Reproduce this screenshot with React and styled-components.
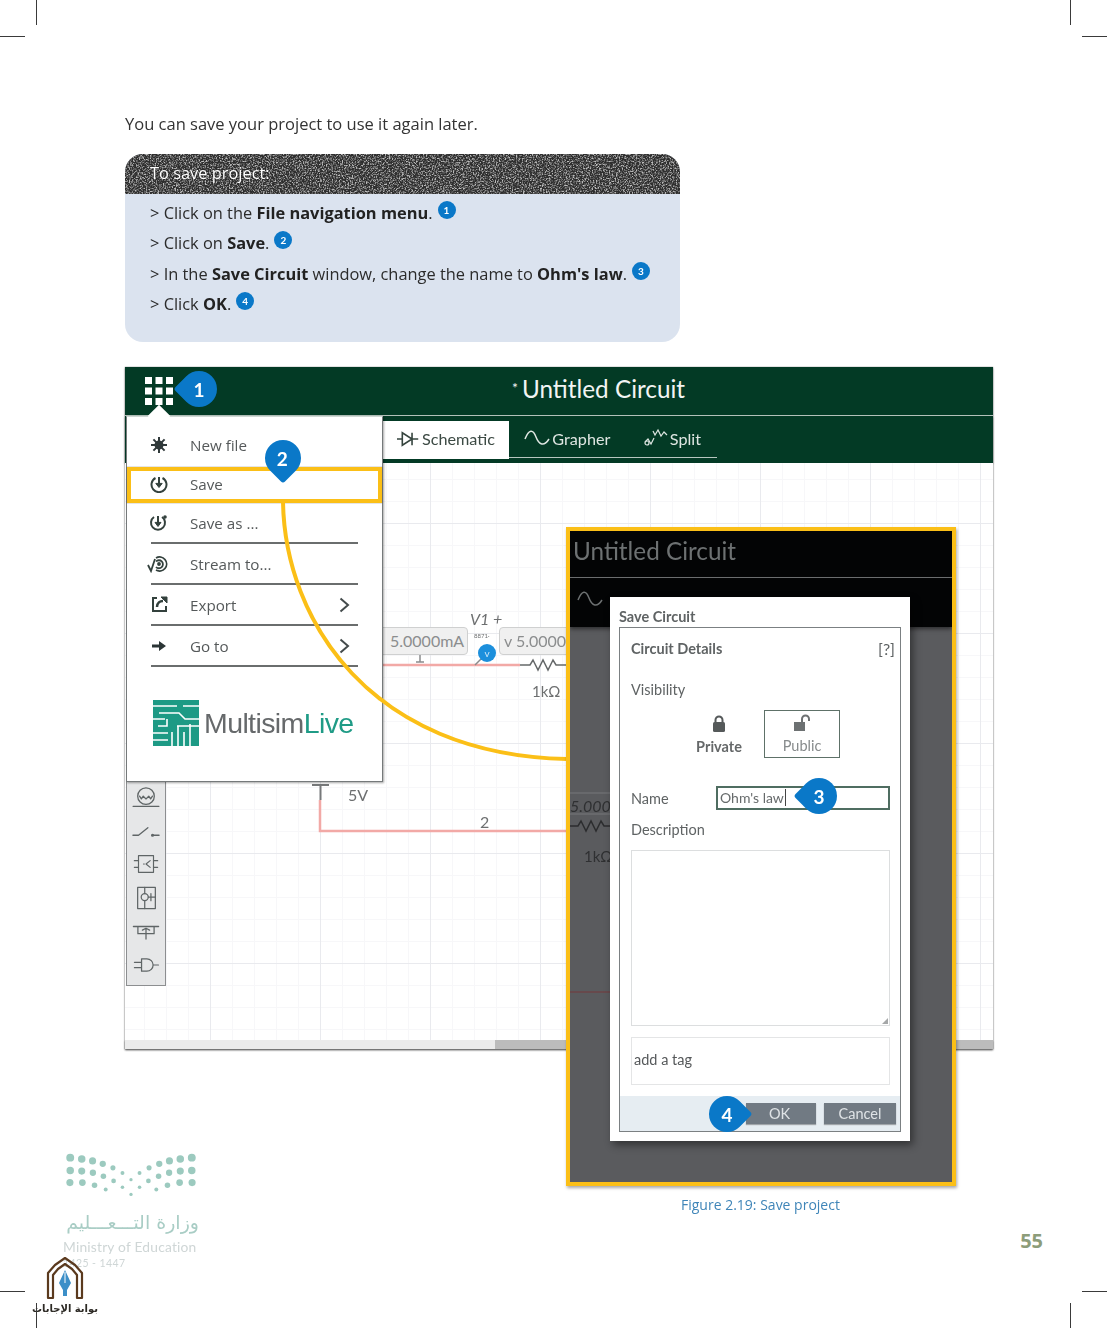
import React from "react";
import styled, { createGlobalStyle } from "styled-components";

const Global = createGlobalStyle`
  html, body { margin: 0; padding: 0; background: #fff; }
  * { box-sizing: border-box; }
`;

const YELLOW = "#fbbf17";
const BLUE = "#0a78c8";
const UI = `Lato, "Liberation Sans", sans-serif`;

const Page = styled.div`
  position: relative;
  width: 1107px;
  height: 1328px;
  overflow: hidden;
  padding: 114px 0 0 125px;
  background: #fff;
  font-family: "Open Sans", "Noto Sans", sans-serif;
  color: #2d2d2d;
`;
const Soft = styled.div`
  filter: blur(0.35px);
`;
const Intro = styled.p`
  margin: 0 0 20px;
  font-size: 16.5px;
  line-height: 20px;
  color: #333;
`;
const Callout = styled.section`
  width: 555px;
  height: 188px;
  border-radius: 18px;
  overflow: hidden;
  background: #dbe3ef;
`;
const CalloutHead = styled.div`
  position: relative;
  height: 40px;
  padding: 9px 25px;
  font-size: 16.4px;
  line-height: 20px;
  color: #fff;
  background: #2e2e2e;
  span { position: relative; text-shadow: 0 0 2px #222; }
`;
const Noise = styled.svg`
  position: absolute;
  inset: 0;
  width: 100%;
  height: 100%;
`;
const Steps = styled.ol`
  list-style: none;
  margin: 0;
  padding: 5px 0 0 25px;
  font-size: 16.4px;
  color: #2b2b2b;
`;
const Step = styled.li`
  height: 30.3px;
  line-height: 28px;
  white-space: nowrap;
  b { font-weight: 700; color: #222; }
`;
const Num = styled.span`
  display: inline-flex;
  align-items: center;
  justify-content: center;
  width: 18px;
  height: 18px;
  margin-left: 5px;
  border-radius: 50%;
  background: ${BLUE};
  color: #fff;
  font: 700 10px ${UI};
  vertical-align: 5px;
`;
const Figure = styled.figure`
  position: relative;
  width: 868px;
  height: 819px;
  margin: 25px 0 0;
`;
const AppWindow = styled.div`
  display: flex;
  flex-direction: column;
  width: 868px;
  height: 682px;
  background: #fff;
  box-shadow: 0 1px 2px rgba(0,0,0,.45), 0 0 1px rgba(0,0,0,.5);
  font-family: ${UI};
`;
const TitleBar = styled.header`
  height: 49px;
  flex: none;
  display: flex;
  align-items: center;
  justify-content: center;
  padding: 0 0 6px 79px;
  background: #033a25;
  border-bottom: 1px solid #b9c7c0;
  color: #f2f4f3;
  font-size: 24.3px;
  sup { font-size: 14px; margin-right: 4px; line-height: 0; }
`;
const TabBar = styled.nav`
  height: 47px;
  flex: none;
  display: flex;
  align-items: flex-start;
  padding: 5px 0 0 258px;
  background: #033a25;
  box-shadow: 0 1px 2px rgba(0,0,0,.4);
`;
const TabTrack = styled.div`
  display: flex;
  height: 37px;
  width: 208px;
  border-bottom: 1px solid #b7c6bf;
`;
const Tab = styled.div`
  width: ${p => p.$w}px;
  height: ${p => p.$active ? 38 : 36}px;
  display: flex;
  align-items: center;
  justify-content: ${p => p.$active ? "center" : "flex-end"};
  gap: 2px;
  padding: 0 ${p => p.$active ? 0 : 16}px ${p => p.$active ? 3 : 2}px 0;
  background: ${p => p.$active ? "#fff" : "transparent"};
  color: ${p => p.$active ? "#3c4a44" : "#dfe6e2"};
  font-size: 16.2px;
`;
const Canvas = styled.main`
  position: relative;
  flex: 1;
  background-color: #fff;
  background-image:
    linear-gradient(#e9eaee 1px, transparent 1px),
    linear-gradient(90deg, #e9eaee 1px, transparent 1px),
    linear-gradient(#f7f7f9 1px, transparent 1px),
    linear-gradient(90deg, #f7f7f9 1px, transparent 1px);
  background-size: 110px 110px, 110px 110px, 22px 22px, 22px 22px;
  background-position: 0 60px, 85px 0, 0 16px, 19px 0;
`;
const Scrollbar = styled.div`
  height: 9px;
  flex: none;
  background: #ececec;
  display: flex;
  justify-content: flex-end;
  box-shadow: 0 1px 2px rgba(0,0,0,.4);
`;
const ScrollThumb = styled.div`
  width: 498px;
  background: #bcbcbc;
`;
const Label = styled.span`
  position: absolute;
  left: ${p => p.$x}px;
  top: ${p => p.$y}px;
  font-size: ${p => p.$size || 16}px;
  font-style: ${p => p.$italic ? "italic" : "normal"};
  color: ${p => p.$color || "#6d6f70"};
  line-height: 1;
  white-space: nowrap;
`;
const Chip = styled.div`
  position: absolute;
  left: ${p => p.$x}px;
  top: 164px;
  width: ${p => p.$w}px;
  height: 28px;
  padding-left: ${p => p.$pad}px;
  border: 1.5px solid #cfd0d0;
  border-radius: 4px;
  background: #f0f0f0;
  color: #8b8d8e;
  font-size: 16px;
  line-height: 25px;
  white-space: nowrap;
`;
const Wires = styled.svg`
  position: absolute;
  left: 0;
  top: 0;
  width: 868px;
  height: 577px;
`;
const Probe = styled.span`
  position: absolute;
  left: 353px;
  top: 181px;
  width: 18px;
  height: 18px;
  border-radius: 50%;
  background: #1c8fdc;
  color: #cfe8fa;
  font-size: 10px;
  line-height: 18px;
  text-align: center;
`;
const Toolbox = styled.aside`
  position: absolute;
  left: 1px;
  top: 414px;
  width: 40px;
  height: 205px;
  display: flex;
  flex-direction: column;
  align-items: center;
  background: #e6e7e8;
  border: 1px solid #8c8e90;
  border-top: 0;
`;
const ToolSlot = styled.div`
  height: 33.4px;
  flex: none;
  display: flex;
  align-items: center;
  justify-content: center;
`;
const Menu = styled.div`
  position: absolute;
  left: 1px;
  top: 49px;
  width: 257px;
  height: 366px;
  padding-top: 8px;
  background: #fff;
  border: 1.5px solid #75797a;
  border-top-color: #cfd6d3;
  box-shadow: 1px 1px 2px rgba(0,0,0,.35);
  &::before {
    content: "";
    position: absolute;
    left: 24px;
    top: -9px;
    width: 16px;
    height: 16px;
    background: #fff;
    transform: rotate(45deg);
  }
`;
const MenuRow = styled.div`
  position: relative;
  height: ${p => p.$h}px;
  margin: 0 24px;
  display: flex;
  align-items: center;
  border-bottom: ${p => p.$line ? "2px solid #6a6d6d" : "0"};
  color: #55595a;
  font-size: 15.2px;
`;
const MenuIcon = styled.span`
  width: 51px;
  margin-left: -12px;
  padding-right: 11px;
  display: flex;
  align-items: center;
  justify-content: center;
  flex: none;
`;
const Chevron = styled.span`
  margin-left: auto;
  margin-right: 8px;
  display: flex;
`;
const Logo = styled.div`
  margin: 33px 0 0 26px;
  display: flex;
  align-items: center;
  gap: 5px;
  font: 400 28.5px "Liberation Sans", sans-serif;
  letter-spacing: -0.6px;
  color: #66696b;
  em { font-style: normal; color: #1f9b86; }
`;
const SaveFrame = styled.div`
  position: absolute;
  left: 2px;
  top: 100px;
  width: 255px;
  height: 36px;
  border: 4px solid ${YELLOW};
  box-shadow: 0 0 1px rgba(0,0,0,.6);
`;
const Connector = styled.svg`
  position: absolute;
  left: 0;
  top: 0;
  width: 868px;
  height: 819px;
  pointer-events: none;
`;
const Overlay = styled.div`
  position: absolute;
  left: 441px;
  top: 160px;
  width: 390px;
  height: 659px;
  background: #5a5b5e;
  border: 4.5px solid ${YELLOW};
  box-shadow: 1px 2px 3px rgba(0,0,0,.35);
  overflow: hidden;
  font-family: ${UI};
`;
const DarkTop = styled.div`
  height: 96px;
  background: #030405;
  box-shadow: 0 2px 4px rgba(0,0,0,.5);
`;
const DarkTitle = styled.div`
  height: 47px;
  border-bottom: 1px solid #6b6d6f;
  padding: 5px 0 0 3px;
  font-size: 24.3px;
  color: #6d7172;
`;
const DarkIcon = styled.div`
  padding: 12px 0 0 6px;
`;
const DimWires = styled.svg`
  position: absolute;
  left: 0;
  top: 96px;
  width: 40px;
  height: 400px;
`;
const Dialog = styled.div`
  position: absolute;
  left: 40px;
  top: 66px;
  width: 300px;
  height: 544px;
  padding: 12px 9px 9px;
  background: #fff;
  box-shadow: 3px 4px 8px rgba(0,0,0,.45);
  color: #5f6364;
`;
const DialogTitle = styled.div`
  height: 18px;
  font-size: 14.5px;
  font-weight: 700;
  line-height: 16px;
`;
const Details = styled.div`
  display: flex;
  flex-direction: column;
  height: 505px;
  border: 1.5px solid #7b8082;
`;
const DetailsBody = styled.div`
  flex: 1;
  padding: 12px 10px 0 11px;
`;
const HeadRow = styled.div`
  display: flex;
  justify-content: space-between;
  font-size: 14.5px;
  font-weight: 700;
  line-height: 18px;
  span { font-size: 16px; font-weight: 400; margin-right: -5px; }
`;
const FieldLabel = styled.div`
  font-size: 14.5px;
  line-height: 18px;
  margin-top: ${p => p.$mt}px;
`;
const Visibility = styled.div`
  display: flex;
  justify-content: flex-start;
  margin: 11px 0 0 43px;
`;
const VisOption = styled.div`
  width: ${p => p.$w}px;
  height: 48px;
  display: flex;
  flex-direction: column;
  align-items: center;
  justify-content: flex-end;
  gap: 5px;
  padding-bottom: 3px;
  font-size: 14.5px;
  font-weight: ${p => p.$selected ? 400 : 700};
  color: ${p => p.$selected ? "#878b8c" : "#656869"};
  border: ${p => p.$selected ? "1.5px solid #5e7168" : "0"};
`;
const NameRow = styled.div`
  display: flex;
  align-items: center;
  margin-top: 28px;
  font-size: 14.5px;
`;
const NameField = styled.div`
  width: 174px;
  height: 24px;
  margin-left: auto;
  padding-left: 2px;
  border: 2px solid #4f6d61;
  font-size: 14px;
  line-height: 20px;
  color: #666a6b;
  span { border-right: 1px solid #444; padding-right: 1px; }
`;
const TextArea = styled.div`
  position: relative;
  height: 176px;
  margin-top: 11px;
  border: 1.5px solid #dcdedf;
  &::after {
    content: "";
    position: absolute;
    right: 1px;
    bottom: 1px;
    border-style: solid;
    border-width: 0 0 6px 6px;
    border-color: transparent transparent #a5a7a8 transparent;
  }
`;
const TagField = styled.div`
  height: 48px;
  margin-top: 11px;
  padding-left: 2px;
  border: 1.5px solid #e4e5e6;
  font-size: 14.5px;
  line-height: 44px;
  color: #55585a;
`;
const DialogFoot = styled.div`
  height: 35px;
  flex: none;
  display: flex;
  justify-content: flex-end;
  gap: 8px;
  padding: 7px 4px 0 0;
  background: #e6edf2;
`;
const FootButton = styled.div`
  width: ${p => p.$w}px;
  height: 21px;
  background: #717a83;
  color: #dfe3e6;
  font-size: 14.5px;
  line-height: 21px;
  text-align: ${p => p.$align};
  padding-left: ${p => p.$pad}px;
  box-shadow: 0 1px 1px rgba(0,0,0,.3);
`;
const Pin = styled.div`
  position: absolute;
  left: ${p => p.$x - 18}px;
  top: ${p => p.$y - 18}px;
  width: 36px;
  height: 36px;
  display: flex;
  align-items: center;
  justify-content: center;
  background: ${BLUE};
  border-radius: ${p => p.$dir === "left" ? "8% 50% 50% 50%" : "50% 50% 8% 50%"};
  transform: rotate(${p => p.$dir === "down" ? 45 : 315}deg);
  color: #fff;
  font: 700 19px ${UI};
  span { transform: rotate(${p => p.$dir === "down" ? -45 : 45}deg); }
`;
const Caption = styled.figcaption`
  position: absolute;
  left: 556px;
  top: 828px;
  font-size: 14px;
  line-height: 20px;
  color: #3f85b8;
  white-space: nowrap;
`;
const PageNumber = styled.div`
  position: absolute;
  right: 64px;
  top: 1227px;
  font: 700 20px "Open Sans", sans-serif;
  color: #8d9d7a;
`;
const Ministry = styled.div`
  position: absolute;
  left: 63px;
  top: 1153px;
  width: 136px;
  display: flex;
  flex-direction: column;
  color: #b5d2cb;
`;
const MinistryAr = styled.div`
  margin-top: 6px;
  height: 26px;
  direction: rtl;
  font: 400 19px "DejaVu Sans", sans-serif;
  line-height: 26px;
  white-space: nowrap;
  color: #a9cdc5;
`;
const MinistryEn = styled.div`
  margin-top: ${p => p.$mt}px;
  font: 400 ${p => p.$size}px Lato, sans-serif;
  letter-spacing: ${p => p.$ls}px;
  white-space: nowrap;
  color: #cfd6d6;
`;
const Watermark = styled.div`
  position: absolute;
  left: 20px;
  top: 1256px;
  width: 90px;
  display: flex;
  flex-direction: column;
  align-items: center;
  color: #2d2a25;
`;
const WatermarkText = styled.div`
  font: 700 10px "DejaVu Sans", sans-serif;
  direction: rtl;
  margin-top: 3px;
  white-space: nowrap;
`;
const Crop = styled.i`
  position: absolute;
  background: #3a3a3a;
  left: ${p => p.$l ?? "auto"};
  right: ${p => p.$r ?? "auto"};
  top: ${p => p.$t ?? "auto"};
  bottom: ${p => p.$b ?? "auto"};
  width: ${p => p.$v ? "1px" : "25px"};
  height: ${p => p.$v ? "25px" : "1px"};
`;

const Stroke = { fill: "none", stroke: "#5f6566", strokeWidth: 1.4, strokeLinecap: "round", strokeLinejoin: "round" };

const GridIcon = () => (
  <svg width="28" height="28" viewBox="0 0 28 28" fill="#fff" style={{ position: "absolute", left: 20, top: 10 }}>
    {[0, 10.5, 21].flatMap(y => [0, 10.5, 21].map(x => <rect key={x + "-" + y} x={x} y={y} width="7" height="7" />))}
  </svg>
);
const Diode = () => (
  <svg width="23" height="18" viewBox="0 0 26 18" fill="none" stroke="#35443e" strokeWidth="1.8">
    <path d="M0 9h6M6 2v14l11-7zM17 2v14M17 9h7" />
  </svg>
);
const Sine = ({ w = 26, c = "#dfe6e2" }) => (
  <svg width={w} height="18" viewBox="0 0 26 18" fill="none" stroke={c} strokeWidth="1.5">
    <path d="M1 10C5 0 9 0 12 8s8 10 13 2" />
  </svg>
);
const SplitIcon = () => (
  <svg width="24" height="20" viewBox="0 0 24 20" fill="none" stroke="#dfe6e2" strokeWidth="1.2">
    <path d="M1 14l3-3 3 5 3-6M9 3l2 4 3-5 3 6 3-4 3 3" />
    <circle cx="3" cy="15" r="2" />
  </svg>
);
const Burst = () => (
  <svg width="16" height="16" viewBox="0 0 16 16" stroke="#30393a" strokeWidth="2" fill="#30393a">
    <path d="M8 0v16M0 8h16M2.4 2.4l11.2 11.2M13.6 2.4L2.4 13.6" /><circle cx="8" cy="8" r="3.5" />
  </svg>
);
const SaveIcon = () => (
  <svg width="18" height="18" viewBox="0 0 18 18" fill="none" stroke="#33413d" strokeWidth="2">
    <path d="M5.500 3a7.500 7.500 0 1 0 7 0" /><path d="M9 2v7" /><path d="M5.800 8.400L9 12.500l3.200-4.100z" fill="#33413d" strokeWidth="1" />
  </svg>
);
const SaveAsIcon = () => (
  <svg width="20" height="18" viewBox="0 0 20 18" fill="none" stroke="#33413d" strokeWidth="2">
    <path d="M5 3a7 7 0 1 0 8 0" /><path d="M9 2v7" /><path d="M6 8.400L9 12.500l3-4.100z" fill="#33413d" strokeWidth="1" /><circle cx="16" cy="3" r="1.800" fill="#33413d" stroke="none" />
  </svg>
);
const StreamIcon = () => (
  <svg width="24" height="18" viewBox="0 0 24 18" fill="none" stroke="#33413d" strokeWidth="1.800">
    <path d="M1 10l3 6 4-12" /><path d="M9 3a7 7 0 1 1 0 12M9 6.500a4 4 0 1 1 0 5.500" /><circle cx="12" cy="9" r="1" fill="#33413d" />
  </svg>
);
const ExportIcon = () => (
  <svg width="17" height="17" viewBox="0 0 17 17" fill="none" stroke="#33413d" strokeWidth="2">
    <path d="M6 2H2v13h13v-5" /><path d="M6 11c0-4 3-6 6-6" strokeWidth="2.500" /><path d="M10 1l6 0 0 6z" fill="#33413d" strokeWidth="1" />
  </svg>
);
const ArrowIcon = () => (
  <svg width="14" height="10" viewBox="0 0 14 10" fill="#2b3536"><path d="M0 3.500h7V0l7 5-7 5V6.500H0z" /></svg>
);
const Chev = () => (
  <svg width="11" height="16" viewBox="0 0 11 16" fill="none" stroke="#444b4c" strokeWidth="2"><path d="M1.500 1.500L9 8l-7.500 6.500" /></svg>
);
const MultisimMark = () => (
  <svg width="46" height="46" viewBox="0 0 46 46">
    <rect width="46" height="46" fill="#1d9a85" />
    <g fill="none" stroke="#fff" strokeWidth="1.600">
      <path d="M0 6h24M30 6h16M6 13h20l6 6h14M0 19h12M5 26h9V19M0 33h15M0 40h15M19 46V32M25 46V26M31 46V32M37 46V24M24 26h22" />
    </g>
  </svg>
);
const Lock = ({ open }) => (
  <svg width="18" height="18" viewBox="0 0 18 18" fill={open ? "#6d7172" : "#55595a"}>
    {open ? <><rect x="1" y="8" width="11" height="9" /><path d="M9 8V5a3.500 3.500 0 0 1 7 0v2" fill="none" stroke="#6d7172" strokeWidth="2" /></> :
      <><rect x="3" y="7" width="12" height="10" rx="1.500" /><path d="M5.500 7V5a3.500 3.500 0 0 1 7 0v2" fill="none" stroke="#55595a" strokeWidth="2" /></>}
  </svg>
);
const Bulb = () => (<svg width="28" height="24" viewBox="0 0 30 26" {...Stroke}><circle cx="15" cy="11" r="9" /><path d="M8 11l2 3 2-3 3 3 3-3 2 3 2-3M1 22h28" /></svg>);
const Switch = () => (<svg width="28" height="15" viewBox="0 0 30 16" {...Stroke}><path d="M1 12h6l10-8M22 12h7" /><circle cx="22" cy="12" r="1" /></svg>);
const Chip1 = () => (<svg width="28" height="20" viewBox="0 0 30 24" {...Stroke}><rect x="6" y="2" width="18" height="20" /><path d="M1 8h5M1 16h5M24 8h5M24 16h5M12 12h1M20 8l-5 4 5 4" /></svg>);
const Chip2 = () => (<svg width="23" height="26" viewBox="0 0 26 28" {...Stroke}><rect x="3" y="2" width="20" height="24" /><circle cx="11" cy="13" r="4" /><path d="M11 2v7M11 17v9M15 13h8M18 9v8" /></svg>);
const Chip3 = () => (<svg width="28" height="18" viewBox="0 0 30 20" {...Stroke}><path d="M1 5h28M6 5v8h18V5M15 7v12M11 9l4-2 4 2" /></svg>);
const AndGate = () => (<svg width="28" height="16" viewBox="0 0 30 18" {...Stroke}><path d="M10 2h6a7 7 0 0 1 0 14h-6zM2 6h8M2 12h8M23 9h6" /></svg>);

const dotRows = [
  [[208, 53, 4], [243, 57, 3.8], [276, 63, 3.6], [307, 72, 3.2], [338, 84, 2.6], [367, 100, 2]],
  [[208, 92, 3.8], [243, 94, 3.6], [277, 99, 3.2], [309, 110, 2.8], [340, 124, 2.4], [367, 143, 1.8]],
  [[207, 129, 3.6], [245, 129, 3.4], [282, 137, 2.8], [316, 150, 2]],
];
const DotLogo = () => (
  <svg width="136" height="50" viewBox="186 40 414 150" fill="#9ccabf">
    {dotRows.flat().flatMap(([x, y, r]) => [
      <circle key={"a" + x + y} cx={x} cy={y} r={r * 3} />,
      <circle key={"b" + x + y} cx={786 - x} cy={y} r={r * 3} />,
    ])}
    <circle cx="393" cy="120" r="5" /><circle cx="393" cy="165" r="5" />
  </svg>
);
const PenArch = () => (
  <svg width="38" height="44" viewBox="0 0 38 44">
    <path d="M2 42V17L9 9 19 2l10 7 7 8v25h-5V19l-5-6-7-5-7 5-5 6v23z" fill="none" stroke="#5b3a1e" strokeWidth="2.200" strokeLinejoin="round" />
    <path d="M19 14l6 13-4 7v6h-4v-6l-4-7z" fill="#3c8fc8" />
    <path d="M19 16v11" stroke="#fff" strokeWidth="1" />
  </svg>
);

export default function App() {
  return (
    <Page>
      <Global />
      <Soft>
        <Intro>You can save your project to use it again later.</Intro>
        <Callout>
          <CalloutHead>
            <Noise aria-hidden="true">
              <filter id="grain"><feTurbulence type="fractalNoise" baseFrequency="0.7" numOctaves="2" seed="4" /><feColorMatrix values="0 0 0 0 0.5 0 0 0 0 0.5 0 0 0 0 0.5 2.4 2.4 0 0 -2.2" /></filter>
              <rect width="100%" height="100%" filter="url(#grain)" />
            </Noise>
            <span>To save project:</span>
          </CalloutHead>
          <Steps>
            <Step>&gt; Click on the <b>File navigation menu</b>.<Num>1</Num></Step>
            <Step>&gt; Click on <b>Save</b>.<Num>2</Num></Step>
            <Step>&gt; In the <b>Save Circuit</b> window, change the name to <b>Ohm's law</b>.<Num>3</Num></Step>
            <Step>&gt; Click <b>OK</b>.<Num>4</Num></Step>
          </Steps>
        </Callout>
        <Figure>
          <AppWindow>
            <TitleBar><sup>*</sup>Untitled Circuit</TitleBar>
            <TabBar>
              <Tab $active $w={126}><Diode />Schematic</Tab>
              <TabTrack>
                <Tab $w={118}><Sine />Grapher</Tab>
                <Tab $w={91}><SplitIcon />Split</Tab>
              </TabTrack>
            </TabBar>
            <Canvas>
              <Wires viewBox="0 0 868 577" fill="none">
                <path d="M258 202h137" stroke="#f2a9a6" strokeWidth="2.500" />
                <path d="M195 337v31h250" stroke="#f2a9a6" strokeWidth="2.500" />
                <path d="M395 202h10l3-5 5 10 5-10 5 10 5-10 3 5h10" stroke="#66696a" strokeWidth="1.500" />
                <path d="M187 322h17M195.500 322v15" stroke="#77797a" strokeWidth="2" />
                <path d="M295 192v7M291 199h8M350 202l8-8" stroke="#8a8c8d" strokeWidth="1.500" />
              </Wires>
              <Chip $x={248} $w={95} $pad={16}>5.0000mA</Chip>
              <Chip $x={374} $w={80} $pad={4}>v 5.0000V</Chip>
              <Label $x={345} $y={148} $size={16} $italic>V1 +</Label>
              <Label $x={349} $y={170} $size={6}>8871·</Label>
              <Probe>v</Probe>
              <Label $x={407} $y={221} $size={15}>1kΩ</Label>
              <Label $x={223} $y={324} $size={16}>5V</Label>
              <Label $x={355} $y={351} $size={16}>2</Label>
            </Canvas>
            <Scrollbar><ScrollThumb /></Scrollbar>
          </AppWindow>
          <Toolbox>
            <ToolSlot><Bulb /></ToolSlot>
            <ToolSlot><Switch /></ToolSlot>
            <ToolSlot><Chip1 /></ToolSlot>
            <ToolSlot><Chip2 /></ToolSlot>
            <ToolSlot><Chip3 /></ToolSlot>
            <ToolSlot><AndGate /></ToolSlot>
          </Toolbox>
          <Menu>
            <MenuRow $h={39}><MenuIcon><Burst /></MenuIcon>New file</MenuRow>
            <MenuRow $h={39}><MenuIcon><SaveIcon /></MenuIcon>Save</MenuRow>
            <MenuRow $h={41} $line><MenuIcon><SaveAsIcon /></MenuIcon>Save as ...</MenuRow>
            <MenuRow $h={41} $line><MenuIcon><StreamIcon /></MenuIcon>Stream to...</MenuRow>
            <MenuRow $h={41} $line><MenuIcon><ExportIcon /></MenuIcon>Export<Chevron><Chev /></Chevron></MenuRow>
            <MenuRow $h={41} $line><MenuIcon><ArrowIcon /></MenuIcon>Go to<Chevron><Chev /></Chevron></MenuRow>
            <Logo><MultisimMark /><span>Multisim<em>Live</em></span></Logo>
          </Menu>
          <SaveFrame />
          <GridIcon />
          <Connector viewBox="0 0 868 819" fill="none">
            <path d="M158 135C160 253 245 388 442 392" stroke={YELLOW} strokeWidth="4" />
          </Connector>
          <Overlay>
            <DarkTop>
              <DarkTitle>Untitled Circuit</DarkTitle>
              <DarkIcon><Sine w={28} c="#6d7172" /></DarkIcon>
            </DarkTop>
            <DimWires viewBox="0 0 40 400" fill="none">
              <path d="M0 166h40M0 187h40" stroke="#77787a" strokeWidth="1" />
              <path d="M0 199h8l3-5 5 10 5-10 5 10 5-10 3 5h6" stroke="#2c2d2f" strokeWidth="1.500" />
              <path d="M0 365h40" stroke="#74393a" strokeWidth="1.200" />
            </DimWires>
            <Label $x={0} $y={267} $size={16} $italic $color="#2f3032">5.000</Label>
            <Label $x={14} $y={318} $size={15} $color="#2f3032">1kΩ</Label>
            <Dialog>
              <DialogTitle>Save Circuit</DialogTitle>
              <Details>
                <DetailsBody>
                  <HeadRow>Circuit Details<span>[?]</span></HeadRow>
                  <FieldLabel $mt={23}>Visibility</FieldLabel>
                  <Visibility>
                    <VisOption $w={90}><Lock />Private</VisOption>
                    <VisOption $w={76} $selected><Lock open />Public</VisOption>
                  </Visibility>
                  <NameRow>Name<NameField><span>Ohm's law</span></NameField></NameRow>
                  <FieldLabel $mt={11}>Description</FieldLabel>
                  <TextArea />
                  <TagField>add a tag</TagField>
                </DetailsBody>
                <DialogFoot>
                  <FootButton $w={70} $align="left" $pad={23}>OK</FootButton>
                  <FootButton $w={72} $align="center" $pad={0}>Cancel</FootButton>
                </DialogFoot>
              </Details>
            </Dialog>
          </Overlay>
          <Pin $x={74} $y={22} $dir="left"><span>1</span></Pin>
          <Pin $x={158} $y={91} $dir="down"><span>2</span></Pin>
          <Pin $x={694} $y={429} $dir="left"><span>3</span></Pin>
          <Pin $x={602} $y={747} $dir="right"><span>4</span></Pin>
          <Caption>Figure 2.19: Save project</Caption>
        </Figure>
      </Soft>
      <PageNumber>55</PageNumber>
      <Ministry>
        <DotLogo />
        <MinistryAr>وزارة التـــعـــليم</MinistryAr>
        <MinistryEn $mt={3} $size={13.8} $ls={0.2}>Ministry of Education</MinistryEn>
        <MinistryEn $mt={2} $size={10.5} $ls={0.4}>1425 - 1447</MinistryEn>
      </Ministry>
      <Watermark>
        <PenArch />
        <WatermarkText>بوابة الإجابات</WatermarkText>
      </Watermark>
      <Crop $v $l="36px" $t="0" />
      <Crop $l="0" $t="36px" />
      <Crop $v $r="36px" $t="0" />
      <Crop $r="0" $t="36px" />
      <Crop $l="0" $b="36px" />
      <Crop $v $l="36px" $b="0" />
      <Crop $v $r="36px" $b="0" />
      <Crop $r="0" $b="36px" />
    </Page>
  );
}
